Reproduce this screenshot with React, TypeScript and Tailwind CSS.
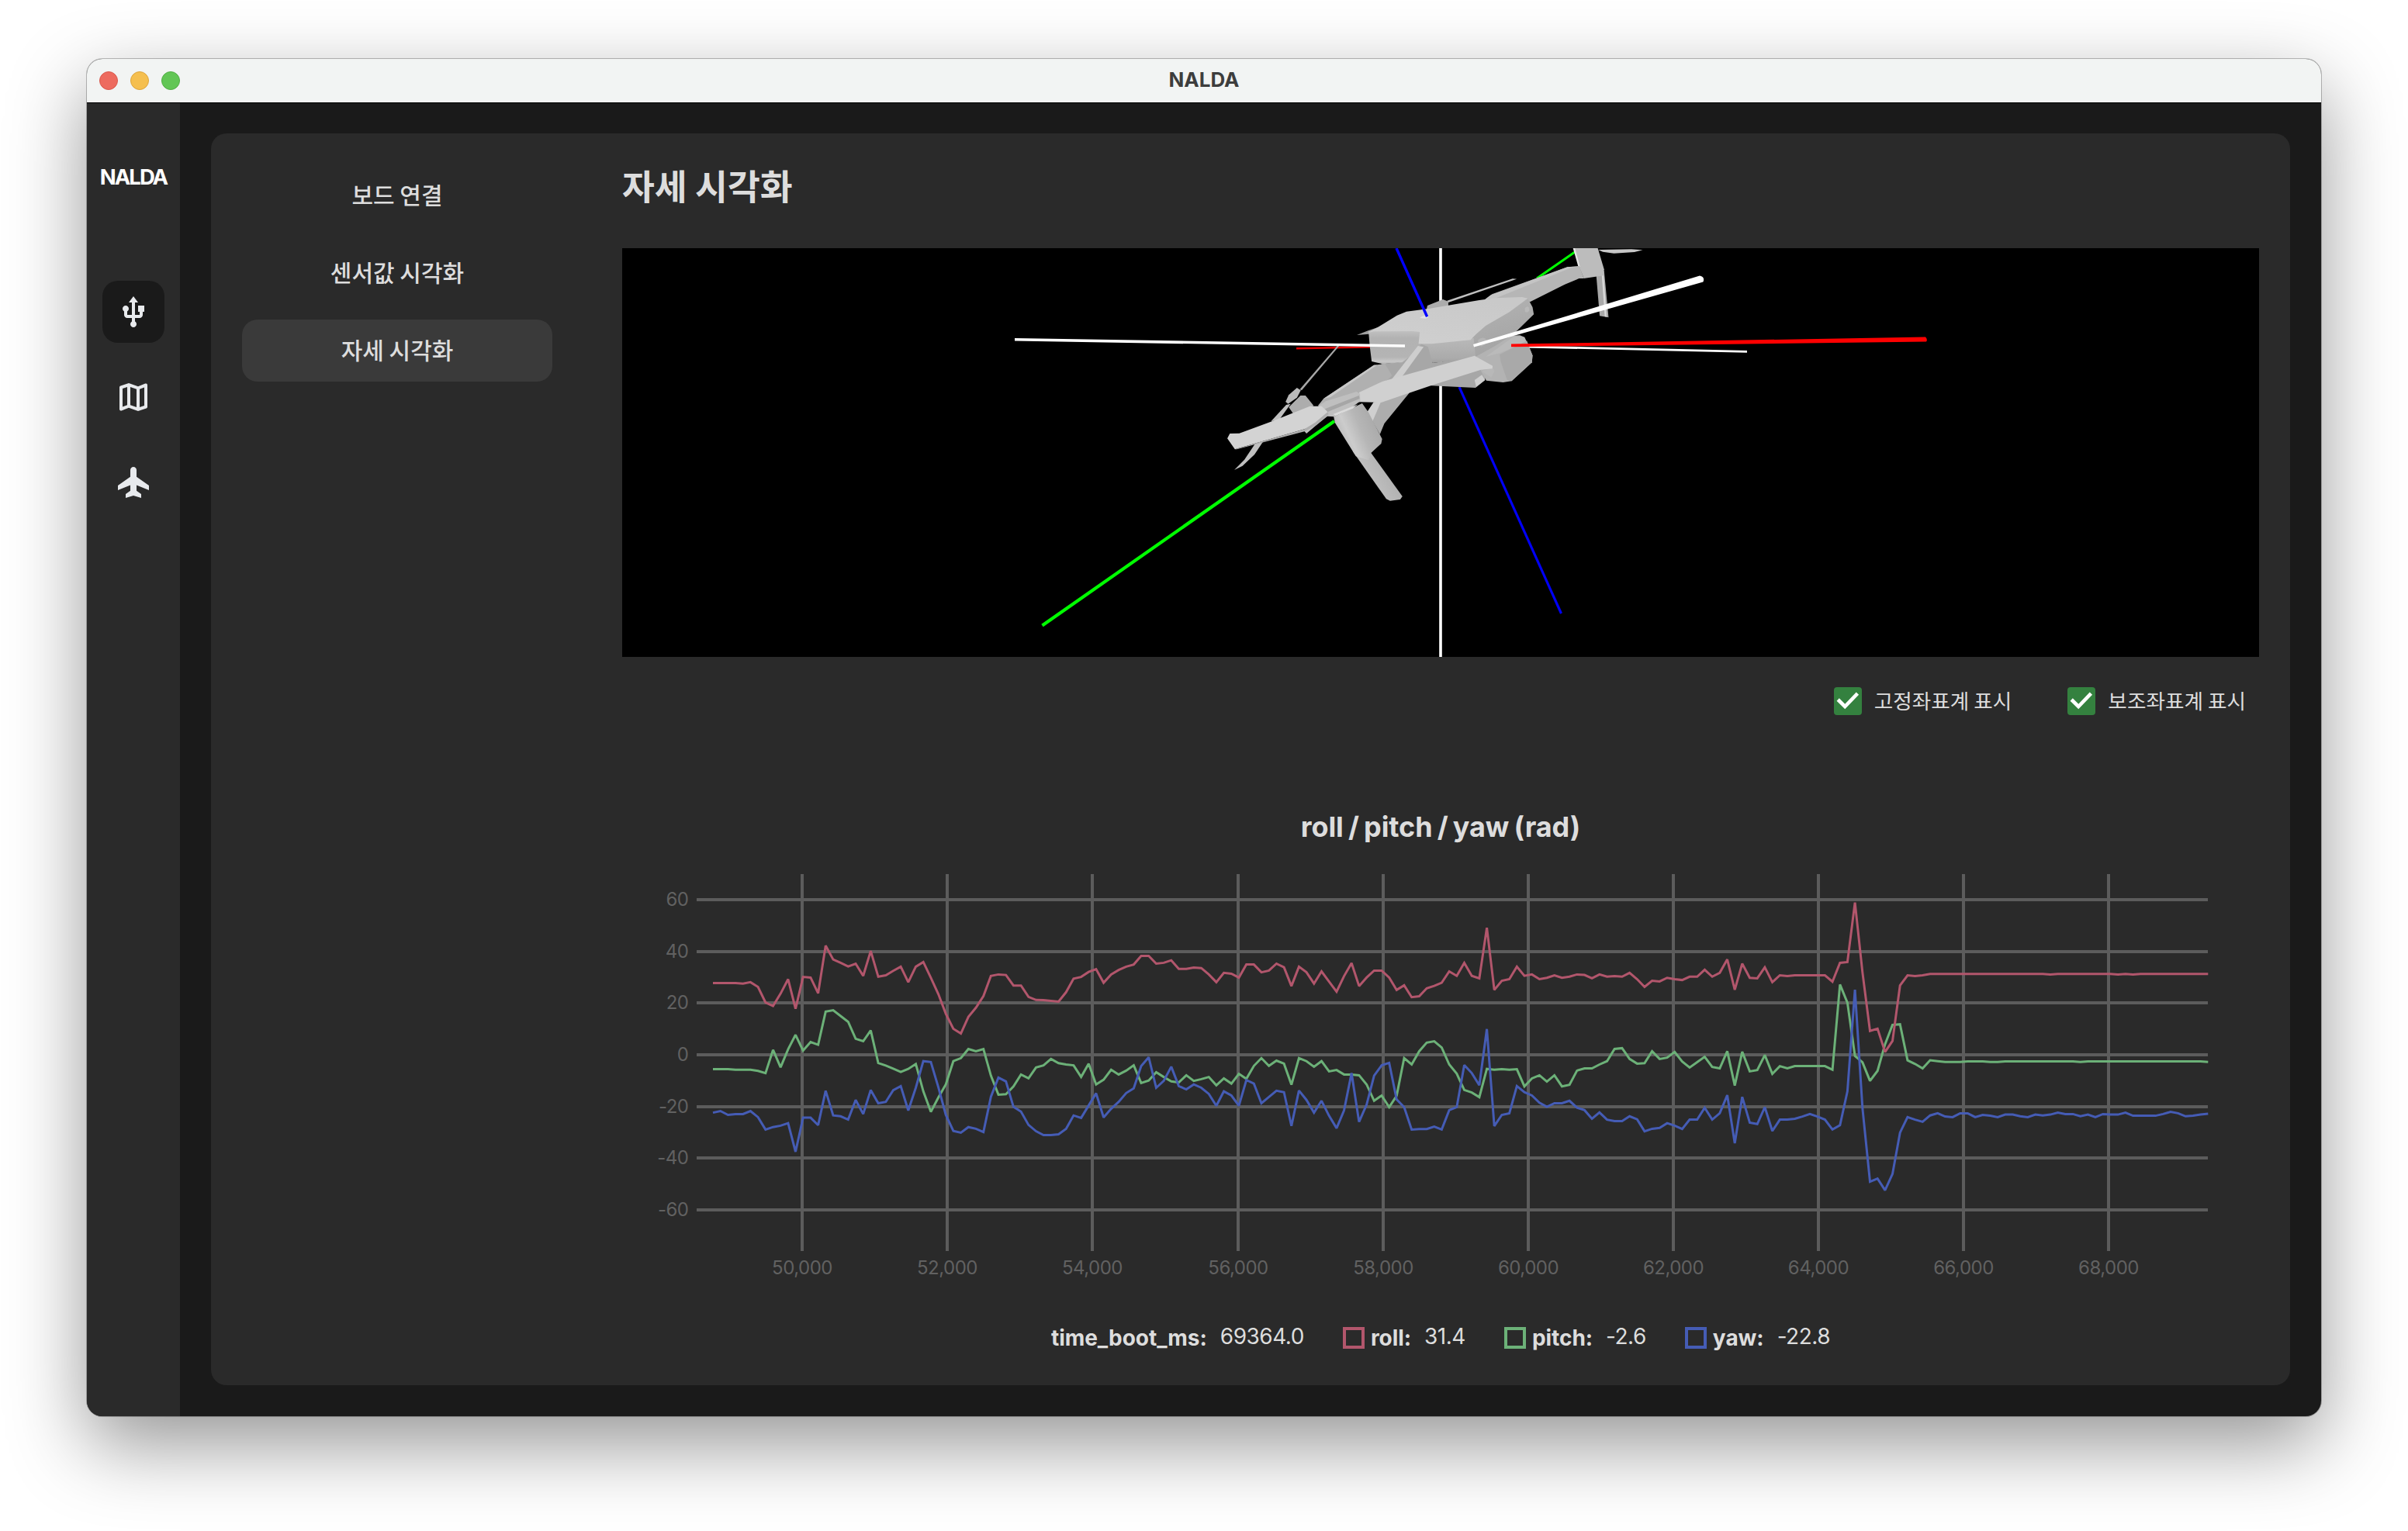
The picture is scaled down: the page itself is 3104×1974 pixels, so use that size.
import React from "react";

const LATIN = "font-['Inter','Noto_Sans_CJK_KR',sans-serif]";
const KOREAN = "font-['Noto_Sans_CJK_KR','Noto_Sans',sans-serif]";

/* ---------- sidebar icons (960-unit symbol grid) ---------- */

const ICONS = {
  usb: "M480-80q-33 0-56.5-23.5T400-160q0-21 11-39t29-29v-92H320q-33 0-56.5-23.5T240-400v-92q-18-9-29-27t-11-41q0-33 23.5-56.5T280-640q33 0 56.5 23.5T360-560q0 23-11 40.5T320-492v92h120v-320h-80l120-160 120 160h-80v320h120v-80h-40v-160h160v160h-40v80q0 33-23.5 56.5T640-320H520v92q19 10 29.5 28t10.5 40q0 33-23.5 56.5T480-80Z",
  map: "m600-120-240-84-186 72q-20 8-37-4.5T120-170v-560q0-13 7.5-23t20.5-15l212-72 240 84 186-72q20-8 37 4.5t17 33.5v560q0 13-7.5 23T812-192l-212 72Zm-40-98v-468l-160-56v468l160 56Zm80 0 120-40v-474l-120 46v468Zm-440-10 120-46v-468l-120 40v474Z",
  flight:
    "M280-80v-100l120-84v-144L80-280v-120l320-224v-176q0-33 23.5-56.5T480-880q33 0 56.5 23.5T560-800v176l320 224v120L560-408v144l120 84v100l-200-60-200 60Z",
};

function SideIcon({ d, active = false }: { d: string; active?: boolean }) {
  return (
    <button
      className={
        "flex h-20 w-20 items-center justify-center rounded-[20px] " + (active ? "bg-[#1a1a1a]" : "")
      }
    >
      <svg viewBox="0 -960 960 960" className="h-12 w-12 fill-[#e8eaed]">
        <path d={d} />
      </svg>
    </button>
  );
}

function NavItem({ label, active = false }: { label: string; active?: boolean }) {
  return (
    <button
      className={
        "flex h-20 w-[400px] items-center justify-center rounded-[20px] pb-[5px] text-[30px] font-medium leading-none text-[#dddddd] " +
        (active ? "bg-[#3a3a3a]" : "")
      }
    >
      {label}
    </button>
  );
}

function Check({ label }: { label: string }) {
  return (
    <label className="flex h-9 items-center text-[26.67px] leading-9 text-[#dddddd]">
      <span className="mr-4 flex h-9 w-9 items-center justify-center rounded-[4px] bg-[#34813f]">
        <svg viewBox="0 0 36 36" className="h-9 w-9 fill-none stroke-white stroke-[4.6]">
          <path d="M5.2 16 L14.2 25 L30.4 8.2" />
        </svg>
      </span>
      <span className="pb-[2px]">{label}</span>
    </label>
  );
}

/* ---------- attitude view ---------- */

function AttitudeView() {
  return (
    <svg viewBox="0 0 2110 527" className="block h-[527px] w-[2110px] bg-black">
      <defs>
        <linearGradient id="shell" x1="0" y1="1" x2="0.6" y2="0">
          <stop offset="0" stopColor="#d0d0d0" />
          <stop offset="1" stopColor="#c9c9c9" />
        </linearGradient>
        <linearGradient id="rear" x1="0" y1="0" x2="0" y2="1">
          <stop offset="0" stopColor="#c4c4c4" />
          <stop offset="0.25" stopColor="#b2b2b2" />
          <stop offset="0.8" stopColor="#b4b4b4" />
          <stop offset="0.93" stopColor="#c8c8c8" />
          <stop offset="1" stopColor="#b0b0b0" />
        </linearGradient>
        <linearGradient id="side" x1="0" y1="0" x2="0.6" y2="1">
          <stop offset="0" stopColor="#b8b8b8" />
          <stop offset="1" stopColor="#a4a4a4" />
        </linearGradient>
        <linearGradient id="nose" x1="0" y1="0" x2="0" y2="1">
          <stop offset="0" stopColor="#b9b9b9" />
          <stop offset="0.8" stopColor="#ababab" />
          <stop offset="1" stopColor="#a0a0a0" />
        </linearGradient>
        <linearGradient id="pod" gradientUnits="userSpaceOnUse" x1="395" y1="760" x2="530" y2="710">
          <stop offset="0" stopColor="#b4b4b4" />
          <stop offset="0.3" stopColor="#cccccc" />
          <stop offset="0.6" stopColor="#b6b6b6" />
          <stop offset="1" stopColor="#a9a9a9" />
        </linearGradient>
        <linearGradient id="leg" gradientUnits="userSpaceOnUse" x1="500" y1="930" x2="575" y2="895">
          <stop offset="0" stopColor="#c0c0c0" />
          <stop offset="1" stopColor="#b0b0b0" />
        </linearGradient>
      </defs>

      {/* axes behind the airframe */}
      <path d="M1055 0V528" stroke="#fff" strokeWidth="3.6" />
      <path d="M1079 179L1210.5 471" stroke="#0000f4" strokeWidth="3.2" />
      <path d="M918 223L541.5 486.5" stroke="#0f0" strokeWidth="4.2" />
      <path d="M1179 39L1228 5" stroke="#0f0" strokeWidth="3" />
      <path d="M869 129.3L970 127.3" stroke="#e60000" strokeWidth="2.6" />
      <path d="M1165 127L1450 133.3" stroke="#fff" strokeWidth="2.8" />

      {/* airframe */}
      <g transform="translate(758 -10) scale(0.408163 0.333333)">
        <path d="M463 366L500 348L530 336L502 362Z" fill="#a0a0a0" />
        <path d="M683 268L686 252L735 228L752 236L752 258Z" fill="#acacac" />
        <path d="M748 233L955 148L968 149L752 240Z" fill="#c0c0c0" />

        <path d="M1225 36L1330 34L1366 37L1340 45L1275 50L1240 44Z" fill="#c6c6c6" />
        <path d="M1219 132L1244 118L1258 298L1230 292Z" fill="#a9a9a9" />
        <path d="M1236 124L1242 122L1252 296L1246 294Z" fill="#d8d8d8" />
        <path d="M1146 30H1224L1244 112L1242 136L1180 147L1166 104Z" fill="#bcbcbc" />
        <path d="M1146 30H1152L1168 102L1162 100Z" fill="#e6e6e6" />
        <path d="M868 228L890 208L1128 103L1166 99L1180 147L1165 147L1120 170L1010 238L985 224Z" fill="#b6b6b6" />
        <path d="M868 228L885 212L1128 103L1166 100L1140 106L900 224Z" fill="#c4c4c4" />

        <path d="M540 478L604 470L640 350L720 350L702 474L832 452L868 520L868 540L838 570L700 562L560 548Z" fill="#a7a7a7" />
        <path d="M835 447L950 368L978 367L993 374L1018 445L1016 472L952 544L925 549L872 542L855 505Z" fill="#b3b3b3" />
        <path d="M870 450L958 372L990 374L1000 392L915 436Z" fill="#bababa" />
        <path d="M914 442L1000 388L1018 445L1016 472L952 544L938 541L918 470Z" fill="#a9a9a9" />

        <path d="M660 396L850 330L1003 224L1018 258L1022 286L958 362L900 408L838 450Z" fill="url(#side)" />
        <path d="M846 385Q862 368 874 385Q876 402 856 410Q844 404 846 385Z" fill="#b5b5b5" />
        <path d="M994 262Q1006 246 1008 270Q1004 282 994 276Z" fill="#b9b9b9" />
        <path d="M500 352L670 344L666 402L640 440L606 472L545 478L510 468L504 410Z" fill="url(#rear)" />
        <path d="M658 396L832 378L838 448L826 458L702 474L688 412Z" fill="url(#nose)" />
        <path
          d="M498 356L532 334L590 290L620 275L690 264L850 231L900 223L985 219L1003 224L945 277L870 330L840 362L822 385L700 400L658 400L662 354L640 351L520 352Z"
          fill="url(#shell)"
        />
        <path d="M662 300Q675 284 690 296L680 302Z" fill="#e2e2e2" />

        <path d="M340 640L358 612L517 482L552 478L574 522L555 546L470 590L472 625Z" fill="#b0b0b0" />
        <path d="M358 612L517 482L527 482L380 606Z" fill="#c8c8c8" />
        <path d="M656 408L674 412L604 530L570 542Z" fill="#cecece" />

        <path d="M630 588L550 708L536 750L496 664L516 626Z" fill="#adadad" />
        <path d="M496 664L516 626L540 622L512 702Z" fill="#cfcfcf" />
        <path d="M891 490L898 505L888 530L858 506Z" fill="#b8b8b8" />
        <path d="M835 540L858 520L868 540L840 566Z" fill="#cfcfcf" />
        <path d="M470 588L545 545L640 512L835 446L892 485L891 496L855 500L700 560L628 590L540 627L470 625Z" fill="#d0d0d0" />

        <path d="M450 815L508 822L607 990L600 1002L568 1007L556 1000Z" fill="url(#leg)" />
        <path d="M390 682L480 630L500 665L543 768L540 786L508 822L500 850L460 835L450 815L394 705Z" fill="url(#pod)" />
        <path d="M340 642L365 622L462 585L473 593L474 622L440 652L392 682L370 680L338 712L304 747L296 736Z" fill="#bfbfbf" />
        <path d="M362 652L470 600L472 612L370 664Z" fill="#a6a6a6" />
        <path d="M388 672L466 634L450 650L396 678Z" fill="#dadada" />

        <path d="M283 576L401 408L407 409L289 580Z" fill="#a8a8a8" />
        <path d="M248 645L285 600L301 600L327 640L262 670Z" fill="#adadad" />
        <path d="M238 624L248 598L274 570L286 580L274 608L246 632Z" fill="#bababa" />
        <path d="M192 700L240 636L254 632L218 694Z" fill="#c0c0c0" />
        <path d="M168 776L140 828L102 872L76 888L108 848L142 786Z" fill="#c0c0c0" />
        <path d="M54 766L62 747L92 746L195 700L315 641L352 641L371 664L332 704L298 730L78 808Z" fill="#d3d3d3" />
        <path d="M298 730L332 704L371 664L374 672L338 712L300 738L84 808L78 808Z" fill="#aeaeae" />
      </g>

      {/* axes in front of the airframe */}
      <path d="M998 0L1037.6 88.3" stroke="#00f" strokeWidth="3.4" />
      <path d="M506 117.8L1009 126" stroke="#fff" strokeWidth="3.6" />
      <path d="M1146 123.6L1680 114.6Q1683 117.6 1681 120.6L1146 127.2Z" fill="#f00" />
      <path d="M1097 124L1389 35.6Q1396 37 1393.4 43.6L1098 127.6Z" fill="#fff" />
    </svg>
  );
}

/* ---------- telemetry chart ---------- */

// Raw telemetry counts; RAW_ZERO is 0° and the count decreases as the angle grows.
const RAW_ZERO = 728;
const RAW_PER_DEGREE = 9.3333;

const fill = (n: number, v: number) => Array<number>(n).fill(v);

const roll = [
  469, 469, 469, 469, 471, 466, 483, 539, 552, 507, 455, 562, 447, 449, 506, 334, 384, 396, 409, 399,
  443, 353, 446, 441, 425, 410, 466, 410, 393, 450, 509, 580, 634, 651, 591, 558, 516, 443, 438, 440,
  478, 478, 519, 530, 531, 533, 536, 502, 453, 447, 429, 419, 468, 438, 422, 410, 402, 371, 371, 399,
  396, 387, 418, 418, 413, 415, 438, 466, 432, 435, 449, 402, 402, 430, 424, 399, 412, 480, 410, 430,
  471, 427, 464, 500, 444, 397, 480, 449, 424, 424, 449, 494, 477, 520, 517, 488, 479, 468, 427, 443,
  396, 443, 452, 269, 494, 461, 455, 410, 443, 438, 455, 450, 441, 450, 446, 438, 440, 452, 438, 446,
  444, 446, 432, 455, 483, 461, 463, 450, 455, 458, 446, 446, 421, 446, 432, 384, 493, 399, 450, 452,
  412, 466, 441, 444, 441, 441, 441, 441, 441, 464, 396, 393, 178, 430, 642, 634, 718, 678, 478, 441,
  444, 441, ...fill(16, 436), 438, ...fill(8, 436), 438, 436, 438, ...fill(10, 436),
];

const pitch = [
  780, 780, 780, 782, 782, 782, 786, 794, 710, 773, 708, 656, 713, 682, 692, 572, 567, 588, 609, 670,
  679, 640, 758, 767, 778, 790, 779, 761, 860, 934, 882, 835, 751, 740, 707, 715, 707, 803, 872, 870,
  842, 799, 813, 774, 766, 743, 758, 763, 766, 808, 760, 835, 818, 782, 799, 785, 766, 830, 821, 791,
  808, 824, 828, 802, 822, 816, 808, 838, 813, 832, 797, 815, 768, 740, 768, 749, 760, 836, 740, 751,
  771, 751, 788, 783, 799, 799, 802, 835, 894, 875, 917, 876, 740, 763, 715, 684, 679, 702, 763, 796,
  855, 864, 881, 779, 782, 780, 782, 780, 842, 813, 802, 825, 802, 842, 836, 785, 777, 777, 763, 751,
  707, 704, 743, 760, 758, 715, 743, 738, 718, 752, 774, 755, 735, 772, 777, 715, 839, 717, 788, 783,
  729, 797, 769, 777, 769, 769, 769, 769, 769, 782, 474, 540, 732, 755, 822, 786, 690, 620, 618, 748,
  761, 777, 748, 751, 754, 754, 754, 752, 752, 752, 754, 754, ...fill(10, 752), 754, ...fill(16, 752), 754,
];

const yaw = [
  937, 931, 945, 942, 942, 931, 953, 998, 989, 984, 975, 1078, 955, 955, 982, 858, 947, 950, 962, 891,
  942, 855, 903, 898, 856, 841, 929, 847, 751, 754, 845, 945, 1003, 1009, 989, 995, 1007, 880, 810, 824,
  916, 933, 981, 1004, 1018, 1018, 1015, 995, 947, 956, 911, 867, 954, 923, 898, 866, 849, 769, 737, 847,
  822, 771, 841, 853, 835, 847, 869, 912, 860, 875, 912, 819, 832, 903, 880, 858, 863, 985, 857, 891,
  937, 894, 948, 993, 929, 794, 970, 908, 803, 766, 757, 889, 917, 998, 996, 996, 987, 998, 928, 917,
  765, 794, 838, 635, 985, 945, 939, 841, 863, 875, 901, 916, 903, 903, 894, 919, 928, 959, 936, 962,
  967, 967, 950, 961, 1004, 995, 992, 975, 984, 996, 962, 962, 919, 962, 939, 874, 1047, 880, 973, 978,
  917, 1003, 962, 962, 959, 951, 942, 951, 962, 998, 982, 860, 493, 920, 1186, 1175, 1217, 1158, 1009, 953,
  962, 970, 947, 939, 951, 953, 939, 939, 953, 945, 948, 953, 944, 944, 950, 953, 944, 947, 944, 937,
  942, 942, 950, 944, 953, 942, 944, 944, 937, 948, 948, 948, 948, 942, 934, 939, 950, 948, 944, 941,
];

const ZERO_Y = 240;
const PX_PER_DEGREE = 3.3333;
const FIRST_X = 117;
const STEP_X = 9.685;

const toPoints = (raw: number[]) =>
  raw
    .map((c, i) => {
      const degrees = (RAW_ZERO - c) / RAW_PER_DEGREE;
      return `${(FIRST_X + i * STEP_X).toFixed(1)},${(ZERO_Y - degrees * PX_PER_DEGREE).toFixed(1)}`;
    })
    .join(" ");

const yTicks = [
  { v: 60, y: 40 },
  { v: 40, y: 107 },
  { v: 20, y: 173 },
  { v: 0, y: 240 },
  { v: -20, y: 307 },
  { v: -40, y: 373 },
  { v: -60, y: 440 },
];
const xTicks = [232, 419, 606, 794, 981, 1168, 1355, 1542, 1729, 1916];

function Chart() {
  return (
    <svg
      viewBox="0 0 2110 540"
      className="block h-[540px] w-[2110px] font-['Inter',sans-serif] text-[24px] tracking-[-0.5px]"
    >
      <g stroke="#5c5c5c" strokeWidth="4">
        {xTicks.map((x) => (
          <path key={x} d={`M${x} 7V493`} />
        ))}
        {yTicks.map((t) => (
          <path key={t.v} d={`M96 ${t.y}H2044`} />
        ))}
      </g>
      <g fill="none" strokeWidth="3" strokeLinejoin="miter" strokeMiterlimit="2">
        <polyline points={toPoints(pitch)} stroke="#6cb178" />
        <polyline points={toPoints(roll)} stroke="#b2566c" />
        <polyline points={toPoints(yaw)} stroke="#455cb5" />
      </g>
      <g fill="#616161">
        {yTicks.map((t) => (
          <text key={t.v} x="85.5" y={t.y + 8} textAnchor="end">
            {t.v}
          </text>
        ))}
        {xTicks.map((x, i) => (
          <text key={x} x={x} y="523" textAnchor="middle">
            {(50000 + i * 2000).toLocaleString("en-US")}
          </text>
        ))}
      </g>
    </svg>
  );
}

function Legend({ name, value, box }: { name: string; value: string; box?: string }) {
  return (
    <div className="flex h-9 items-center text-[28px] leading-9 text-[#dddddd]">
      {box && <span className={"mr-2 h-7 w-7 border-4 " + box} />}
      <span className="font-bold tracking-[-0.05px]">{name}:</span>
      <span className="ml-[17px] pb-1 tracking-[-0.5px]">{value}</span>
    </div>
  );
}

/* ---------- page ---------- */

export default function App() {
  return (
    <div className={"h-[1974px] w-[3104px] overflow-hidden bg-white pl-28 pt-[76px] " + KOREAN}>
      <div className="flex h-[1750px] w-[2880px] flex-col overflow-hidden rounded-[20px] bg-[#1a1a1a] shadow-[0_0_0_1px_rgba(0,0,0,0.25),0_36px_100px_rgba(0,0,0,0.42)]">
        <header className="grid h-[57px] shrink-0 grid-cols-3 items-center border-b border-black bg-[#f2f4f3] px-4">
          <div className="flex gap-4">
            <span className="h-6 w-6 rounded-full border border-[#d9594d] bg-[#ed6b5f]" />
            <span className="h-6 w-6 rounded-full border border-[#dca43c] bg-[#f5bf4f]" />
            <span className="h-6 w-6 rounded-full border border-[#52ad45] bg-[#62c655]" />
          </div>
          <div className={"pb-[3px] text-center text-[26px] font-bold leading-none text-[#3d3d3d] " + LATIN}>
            NALDA
          </div>
        </header>

        <div className="flex min-h-0 grow">
          <aside className="flex w-[120px] flex-col items-center bg-[#2a2a2a] pt-[76px]">
            <div
              className={
                "mb-[113px] flex h-10 items-center text-[27.5px] font-bold leading-none tracking-[-2px] text-white " +
                LATIN
              }
            >
              NALDA
            </div>
            <nav className="flex flex-col gap-[30px]">
              <SideIcon d={ICONS.usb} active />
              <SideIcon d={ICONS.map} />
              <SideIcon d={ICONS.flight} />
            </nav>
          </aside>

          <div className="grow px-10 pb-10 pt-[39px]">
            <main className="flex h-full rounded-[20px] bg-[#2a2a2a] p-10">
              <nav className="flex w-[400px] flex-col gap-5">
                <NavItem label="보드 연결" />
                <NavItem label="센서값 시각화" />
                <NavItem label="자세 시각화" active />
              </nav>

              <section className="ml-[90px] flex w-[2110px] flex-col">
                <h1 className="h-[108px] text-[45.5px] font-bold leading-[52px] text-[#dddddd]">자세 시각화</h1>
                <AttitudeView />
                <div className="mt-[39px] flex justify-end gap-[72px] pr-[17px]">
                  <Check label="고정좌표계 표시" />
                  <Check label="보조좌표계 표시" />
                </div>
                <h2
                  className={
                    "mt-[118px] h-[80px] text-center text-[36px] font-bold leading-[52px] tracking-[-0.1px] [word-spacing:-2.2px] text-[#dddddd] " +
                    LATIN
                  }
                >
                  roll / pitch / yaw (rad)
                </h2>
                <Chart />
                <div className={"mt-[47px] flex justify-center gap-[50px] " + LATIN}>
                  <Legend name="time_boot_ms" value="69364.0" />
                  <Legend name="roll" value="31.4" box="border-[#b2566c]" />
                  <Legend name="pitch" value="-2.6" box="border-[#6cb178]" />
                  <Legend name="yaw" value="-22.8" box="border-[#455cb5]" />
                </div>
              </section>
            </main>
          </div>
        </div>
      </div>
    </div>
  );
}
